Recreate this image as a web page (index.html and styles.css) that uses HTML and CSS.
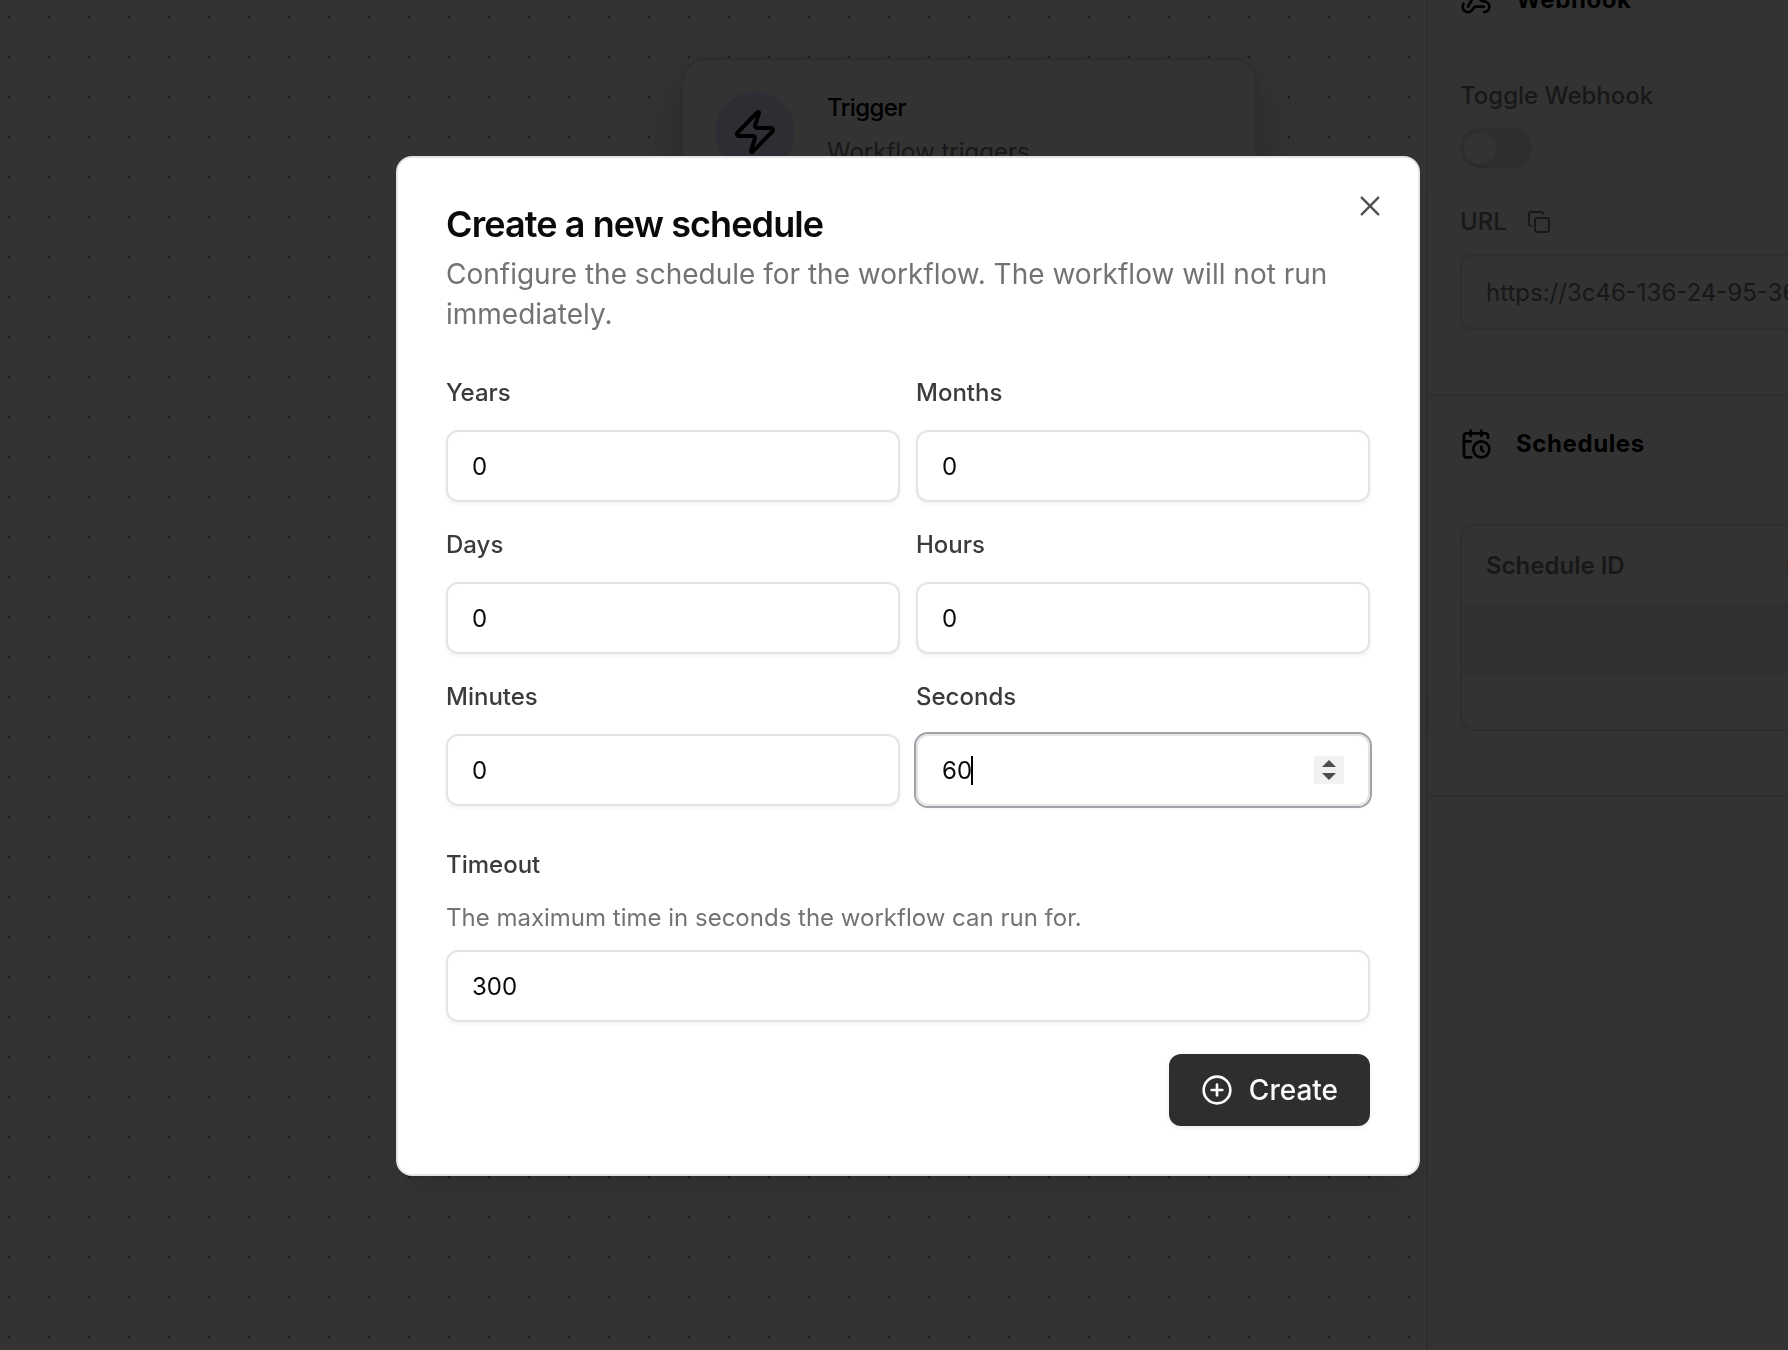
FILE: index.html
```html
<!DOCTYPE html>
<html lang="en">
<head>
<meta charset="utf-8">
<title>Create a new schedule</title>
<link rel="stylesheet" href="styles.css">
</head>
<body>
<div class="app">
  <main class="canvas">
    <article class="node">
      <div class="node-icon">
        <svg class="icon-zap" viewBox="0 0 24 24"><path d="M4 14a1 1 0 0 1-.78-1.63l9.9-10.2a.5.5 0 0 1 .86.46l-1.92 6.02A1 1 0 0 0 13 10h7a1 1 0 0 1 .78 1.63l-9.9 10.2a.5.5 0 0 1-.86-.46l1.92-6.02A1 1 0 0 0 11 14z"/></svg>
      </div>
      <div class="node-text">
        <div class="node-title">Trigger</div>
        <div class="node-sub">Workflow triggers</div>
      </div>
    </article>
  </main>
  <aside class="sidebar">
    <span class="grip"></span>
    <section class="section">
      <header class="section-head">
        <svg class="icon-md" viewBox="0 0 24 24"><path d="M18 16.98h-5.99c-1.1 0-1.95.94-2.48 1.9A4 4 0 0 1 2 17c.01-.7.2-1.4.57-2"/><path d="m6 17 3.13-5.78c.53-.97.1-2.18-.5-3.1a4 4 0 1 1 6.89-4.06"/><path d="m12 6 3.13 5.73C15.66 12.7 16.9 13 18 13a4 4 0 0 1 0 8"/></svg>
        <span class="section-title">Webhook</span>
      </header>
      <div class="section-body">
        <div class="side-label">Toggle Webhook</div>
        <div class="switch"><span class="thumb"></span></div>
        <div class="url-row">
          <span class="side-label">URL</span>
          <svg class="icon-sm" viewBox="0 0 24 24"><rect width="14" height="14" x="8" y="8" rx="2"/><path d="M4 16c-1.1 0-2-.9-2-2V4c0-1.1.9-2 2-2h10c1.1 0 2 .9 2 2"/></svg>
        </div>
        <div class="url-box">https://3c46-136-24-95-36</div>
      </div>
    </section>
    <section class="section">
      <header class="section-head">
        <svg class="icon-md" viewBox="0 0 24 24"><path d="M21 7.5V6a2 2 0 0 0-2-2H5a2 2 0 0 0-2 2v14a2 2 0 0 0 2 2h3.5"/><path d="M16 2v4"/><path d="M8 2v4"/><path d="M3 10h5"/><path d="M17.5 17.5 16 16.3V14"/><circle cx="16" cy="16" r="6"/></svg>
        <span class="section-title">Schedules</span>
      </header>
      <div class="section-body">
        <div class="table">
          <div class="tr head"><span class="th-id">Schedule ID</span><span>Interval</span></div>
          <div class="tr empty"></div>
          <div class="tr last"></div>
        </div>
      </div>
    </section>
  </aside>
</div>

<div class="overlay">
  <div class="dialog">
    <svg class="close" viewBox="0 0 15 15"><path d="M11.7816 4.03157C12.0062 3.80702 12.0062 3.44295 11.7816 3.2184C11.5571 2.99385 11.193 2.99385 10.9685 3.2184L7.50005 6.68682L4.03164 3.2184C3.80708 2.99385 3.44301 2.99385 3.21846 3.2184C2.99391 3.44295 2.99391 3.80702 3.21846 4.03157L6.68688 7.49999L3.21846 10.9684C2.99391 11.193 2.99391 11.557 3.21846 11.7816C3.44301 12.0061 3.80708 12.0061 4.03164 11.7816L7.50005 8.31316L10.9685 11.7816C11.193 12.0061 11.5571 12.0061 11.7816 11.7816C12.0062 11.557 12.0062 11.193 11.7816 10.9684L8.31322 7.49999L11.7816 4.03157Z"/></svg>
    <header class="dialog-head">
      <h2 class="title">Create a new schedule</h2>
      <p class="desc">Configure the schedule for the workflow. The workflow will not run immediately.</p>
    </header>
    <div class="grid">
      <div class="field"><div class="label">Years</div><div class="input">0</div></div>
      <div class="field"><div class="label">Months</div><div class="input">0</div></div>
      <div class="field"><div class="label">Days</div><div class="input">0</div></div>
      <div class="field"><div class="label">Hours</div><div class="input">0</div></div>
      <div class="field"><div class="label">Minutes</div><div class="input">0</div></div>
      <div class="field"><div class="label">Seconds</div>
        <div class="input focused"><span>60</span><span class="caret"></span>
          <span class="spinner"><i class="up"></i><i class="down"></i></span>
        </div>
      </div>
    </div>
    <div class="field">
      <div class="label">Timeout</div>
      <p class="hint">The maximum time in seconds the workflow can run for.</p>
      <div class="input">300</div>
    </div>
    <footer class="dialog-foot">
      <button class="create">
        <svg class="icon-plus" viewBox="0 0 24 24"><circle cx="12" cy="12" r="10"/><path d="M8 12h8"/><path d="M12 8v8"/></svg>
        <span>Create</span>
      </button>
    </footer>
  </div>
</div>
</body>
</html>
```
FILE: styles.css
```css
* { box-sizing: border-box; }
body {
  margin: 0;
  font-family: Inter, "Liberation Sans", sans-serif;
  font-size: 24px;
  color: #0a0a0a;
  background: #fff;
  overflow: hidden;
}
h2, p { margin: 0; }
svg { display: block; flex: none; }
svg:not(.close) {
  fill: none;
  stroke: currentColor;
  stroke-width: 2;
  stroke-linecap: round;
  stroke-linejoin: round;
}

.app { display: flex; width: 1788px; height: 1350px; overflow: hidden; }

/* workflow canvas */
.canvas {
  width: 1426px;
  background-image: radial-gradient(circle at 8.8px 17.3px, #777 0.8px, transparent 1.6px);
  background-size: 40px 40px;
  padding: 58px 0 0 681px;
}
.node {
  display: flex;
  gap: 32px;
  width: 576px;
  height: 240px;
  padding: 32px;
  border: 2px solid #e0e0e0;
  border-radius: 24px;
  background: #fff;
  box-shadow: 0 20px 50px rgba(0, 0, 0, .25);
}
.node-icon {
  display: flex;
  align-items: center;
  justify-content: center;
  width: 80px;
  height: 80px;
  border-radius: 50%;
  color: #000;
  background: #e0e7ff;
}
.icon-zap { width: 48px; height: 48px; }
.node-title { line-height: 32px; font-weight: 500; color: #000; letter-spacing: -.025em; }
.node-sub { margin-top: 12px; line-height: 32px; color: #777; }

/* side panel */
.sidebar { position: relative; width: 362px; border-left: 2px solid #e4e4e7; }
.grip { position: absolute; left: -3px; top: 695px; width: 4px; height: 39px; background: #ddd; border-radius: 1px; }
.section { border-bottom: 2px solid #e4e4e7; padding: 0 0 64px 32px; }
.section:first-of-type { margin-top: -48px; }
.section-head {
  display: flex;
  align-items: center;
  gap: 24px;
  height: 96px;
  margin-bottom: 32px;
  font-weight: 700;
  letter-spacing: .025em;
  color: #000;
}
.section-title { padding-bottom: 2px; }
.icon-md { width: 32px; height: 32px; }
.icon-sm { width: 24px; height: 24px; color: #777; }
.side-label { line-height: 32px; font-weight: 500; color: #777; }
.switch { width: 72px; height: 40px; margin-top: 16px; padding: 4px; border-radius: 20px; background: #e4e4e7; }
.thumb { display: block; width: 32px; height: 32px; border-radius: 50%; background: #fff; box-shadow: 0 20px 30px -6px rgba(0,0,0,.1), 0 8px 12px -8px rgba(0,0,0,.1); }
.url-row { display: flex; align-items: center; gap: 20px; height: 40px; margin: 34px 0 12px; }
.url-box {
  height: 76px;
  padding: 0 24px;
  border: 2px solid #e4e4e7;
  border-right: 0;
  border-radius: 12px 0 0 12px;
  line-height: 74px;
  white-space: nowrap;
  overflow: hidden;
  color: #777;
}
.table { height: 207px; border: 2px solid #e4e4e7; border-right: 0; border-radius: 16px 0 0 16px; overflow: hidden; }
.tr { display: flex; height: 66px; border-bottom: 2px solid #e4e4e7; padding-left: 24px; white-space: nowrap; }
.tr.head { height: 81px; line-height: 79px; font-weight: 600; color: #777; }
.th-id { width: 300px; flex: none; }
.tr.empty { background: #f4f4f5; }
.tr.last { border-bottom: 0; }

/* dialog */
.overlay { position: fixed; inset: 0; padding: 156px 0 0 396px; background: rgba(0, 0, 0, .8); }
.dialog {
  position: relative;
  display: flex;
  flex-direction: column;
  gap: 32px;
  width: 1024px;
  padding: 48px;
  border: 2px solid #e4e4e4;
  border-radius: 16px;
  background: #fff;
  box-shadow: 0 20px 30px -6px rgba(0, 0, 0, .1), 0 8px 12px -8px rgba(0, 0, 0, .1);
}
.close { position: absolute; top: 32px; right: 32px; width: 32px; height: 32px; fill: #0a0a0a; opacity: .7; }
.dialog-head { display: flex; flex-direction: column; gap: 12px; }
.title { font-size: 36px; line-height: 36px; font-weight: 600; letter-spacing: -.025em; }
.desc { font-size: 28px; line-height: 40px; color: #737373; }
.grid { display: grid; grid-template-columns: 1fr 1fr; gap: 16px; }
.field { display: flex; flex-direction: column; gap: 16px; }
.label { height: 48px; line-height: 54px; font-weight: 500; color: #3b3b3b; }
.hint { line-height: 32px; color: #737373; }
.input {
  display: flex;
  align-items: center;
  height: 72px;
  padding: 0 24px;
  border: 2px solid #e4e4e4;
  border-radius: 12px;
  box-shadow: 0 2px 4px rgba(0, 0, 0, .05);
}
.input.focused { box-shadow: 0 0 0 2px #a1a1aa, 0 2px 4px rgba(0, 0, 0, .05); }
.caret { width: 2px; height: 29px; margin-left: -1px; background: #000; }
.spinner {
  display: flex;
  flex-direction: column;
  align-items: center;
  justify-content: center;
  gap: 6px;
  width: 30px;
  height: 28px;
  margin-left: auto;
  background: #f1f1f1;
}
.up, .down { width: 14px; height: 7px; background: #4d4d4d; }
.up { clip-path: polygon(50% 0, 100% 100%, 0 100%); }
.down { clip-path: polygon(0 0, 100% 0, 50% 100%); }
.dialog-foot { display: flex; justify-content: flex-end; }
.create {
  display: flex;
  align-items: center;
  gap: 16px;
  height: 72px;
  padding: 0 32px;
  border: 0;
  border-radius: 12px;
  background: #2e2e2e;
  color: #fafafa;
  font: 500 28px Inter, sans-serif;
  box-shadow: 0 2px 4px rgba(0, 0, 0, .08);
}
.icon-plus { width: 32px; height: 32px; }
```
